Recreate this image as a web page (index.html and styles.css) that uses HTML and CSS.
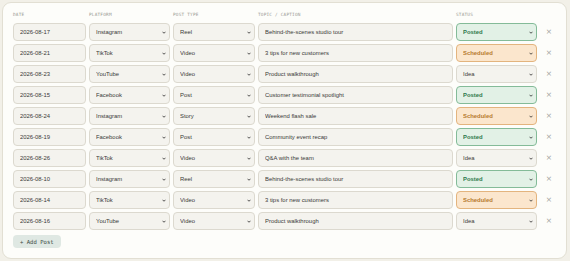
FILE: index.html
```html
<!DOCTYPE html>
<html lang="en">
<head>
    <meta charset="UTF-8">
    <meta name="viewport" content="width=device-width, initial-scale=1.0">
    <title>Content Calendar</title>
    <link rel="stylesheet" href="styles.css">
</head>
<body>
<div class="card">
    <div class="row head">
        <div class="label">Date</div>
        <div class="label">Platform</div>
        <div class="label">Post type</div>
        <div class="label">Topic / Caption</div>
        <div class="label">Status</div>
        <div></div>
    </div>
    <div id="rows"></div>
    <button class="add-button">+ Add Post</button>
</div>

<script>
    // Planned posts
    const posts = [
        ["2026-08-17", "Instagram", "Reel", "Behind-the-scenes studio tour", "Posted"],
        ["2026-08-21", "TikTok", "Video", "3 tips for new customers", "Scheduled"],
        ["2026-08-23", "YouTube", "Video", "Product walkthrough", "Idea"],
        ["2026-08-15", "Facebook", "Post", "Customer testimonial spotlight", "Posted"],
        ["2026-08-24", "Instagram", "Story", "Weekend flash sale", "Scheduled"],
        ["2026-08-19", "Facebook", "Post", "Community event recap", "Posted"],
        ["2026-08-26", "TikTok", "Video", "Q&A with the team", "Idea"],
        ["2026-08-10", "Instagram", "Reel", "Behind-the-scenes studio tour", "Posted"],
        ["2026-08-14", "TikTok", "Video", "3 tips for new customers", "Scheduled"],
        ["2026-08-16", "YouTube", "Video", "Product walkthrough", "Idea"]
    ];

    const platforms = ["Instagram", "TikTok", "YouTube", "Facebook"];
    const types = ["Reel", "Video", "Post", "Story"];
    const statuses = ["Idea", "Scheduled", "Posted"];

    const chevron = '<svg class="chevron" viewBox="0 0 8 5"><path d="M1 1l3 3 3-3" fill="none" stroke="#2b2b2b" stroke-width="1.6"/></svg>';

    function makeSelect(options, value, extra) {
        let html = '<span class="field"><select class="input ' + (extra || '') + '">';
        options.forEach(o => {
            html += '<option' + (o === value ? ' selected' : '') + '>' + o + '</option>';
        });
        return html + '</select>' + chevron + '</span>';
    }

    const rows = document.getElementById('rows');
    posts.forEach(p => {
        const row = document.createElement('div');
        row.className = 'row';
        row.innerHTML =
            '<input class="input" type="text" value="' + p[0] + '">' +
            makeSelect(platforms, p[1]) +
            makeSelect(types, p[2]) +
            '<input class="input" type="text" value="' + p[3].replace('&', '&amp;') + '">' +
            makeSelect(statuses, p[4], 'status-' + p[4].toLowerCase()) +
            '<button class="remove">×</button>';
        rows.appendChild(row);
    });
</script>
</body>
</html>
```

FILE: styles.css
```css
body {
    font-family: "Liberation Sans", Arial, sans-serif;
    background-color: #f2f0e8;
    margin: 0;
    padding: 2px 3px 3px 2px;
}
.card {
    background-color: #fdfdfa;
    border: 1px solid #e2dfd3;
    border-radius: 9px;
    padding: 8px 10px 8px 10px;
    height: 239px;
}
.row {
    display: grid;
    grid-template-columns: 73px 81px 82px 195px 81px 18px;
    column-gap: 3px;
    margin-bottom: 3px;
    align-items: center;
}
.row.head {
    margin-bottom: 5px;
}
.label {
    font-family: "DejaVu Sans Mono", "Liberation Mono", monospace;
    font-size: 4.4px;
    line-height: 7px;
    letter-spacing: 0.2px;
    text-transform: uppercase;
    color: #9a9a94;
}
.field {
    position: relative;
    display: block;
}
.input {
    display: block;
    box-sizing: border-box;
    width: 100%;
    height: 18px;
    margin: 0;
    padding: 0 6px;
    font-family: "Liberation Sans", Arial, sans-serif;
    font-size: 5.9px;
    color: #3a3a38;
    background-color: #f4f3ee;
    border: 1px solid #dcd9cf;
    border-radius: 4px;
    outline: none;
}
select.input {
    appearance: none;
    -webkit-appearance: none;
}
.chevron {
    position: absolute;
    right: 4px;
    top: 7.5px;
    width: 4px;
    height: 3px;
    pointer-events: none;
}
.status-posted {
    background-color: #e2f1e6;
    border-color: #84bb98;
    color: #2f7a4b;
    font-weight: bold;
}
.status-scheduled {
    background-color: #fbe6cd;
    border-color: #e3b47e;
    color: #b67a2e;
    font-weight: bold;
}
.remove {
    border: none;
    background: none;
    padding: 0;
    font-family: "DejaVu Sans", sans-serif;
    font-size: 7.5px;
    line-height: 10px;
    color: #a3a39e;
    cursor: pointer;
    text-align: center;
    width: 100%;
}
.add-button {
    display: block;
    margin-top: 5px;
    height: 13px;
    padding: 0 7px;
    font-family: "DejaVu Sans Mono", "Liberation Mono", monospace;
    font-size: 5.6px;
    color: #3c4c45;
    background-color: #dfe8e3;
    border: none;
    border-radius: 4px;
    cursor: pointer;
}
```
